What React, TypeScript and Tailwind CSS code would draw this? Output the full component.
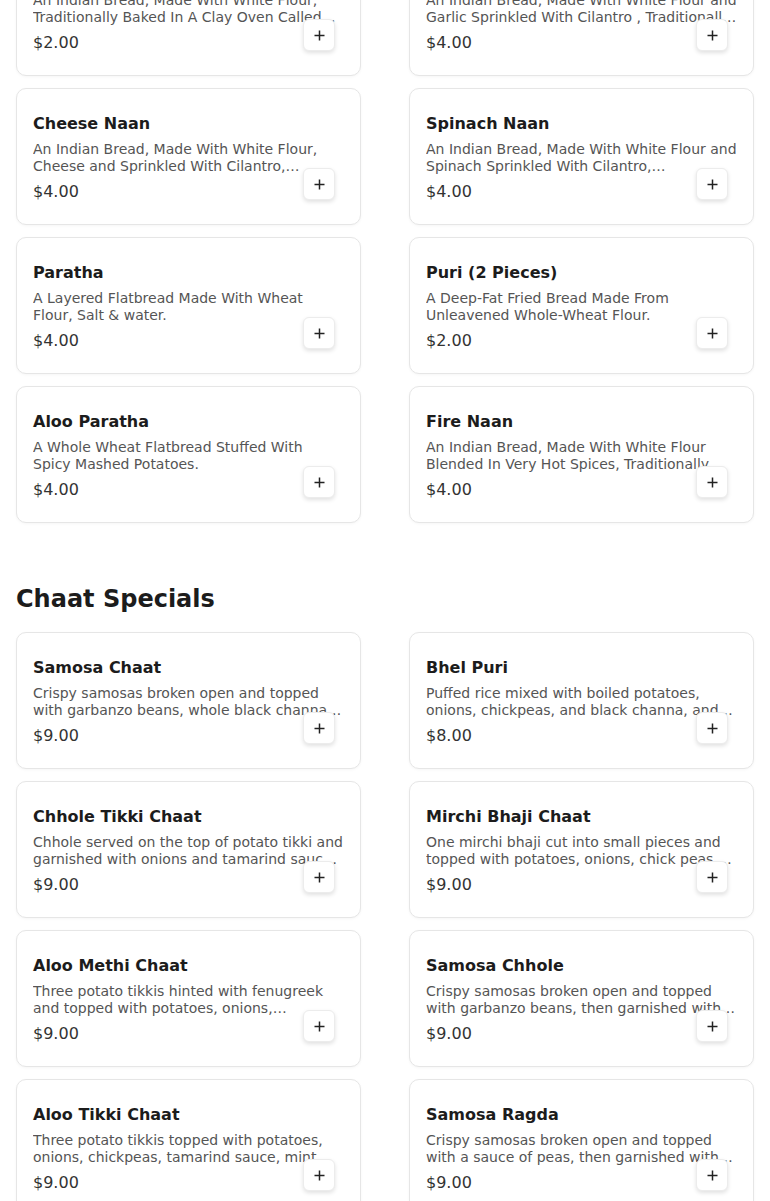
import React from "react";

type Item = { name: string; desc: string; price: string };

const breads: Item[] = [
  { name: "Plain Naan", desc: "An Indian Bread, Made With White Flour, Traditionally Baked In A Clay Oven Called Tandoor.", price: "$2.00" },
  { name: "Garlic Naan", desc: "An Indian Bread, Made With White Flour and Garlic Sprinkled With Cilantro , Traditionally Baked In A Clay Oven.", price: "$4.00" },
  { name: "Cheese Naan", desc: "An Indian Bread, Made With White Flour, Cheese and Sprinkled With Cilantro, Traditionally Baked In A Clay Oven.", price: "$4.00" },
  { name: "Spinach Naan", desc: "An Indian Bread, Made With White Flour and Spinach Sprinkled With Cilantro, Traditionally Baked In A Clay Oven.", price: "$4.00" },
  { name: "Paratha", desc: "A Layered Flatbread Made With Wheat Flour, Salt & water.", price: "$4.00" },
  { name: "Puri (2 Pieces)", desc: "A Deep-Fat Fried Bread Made From Unleavened Whole-Wheat Flour.", price: "$2.00" },
  { name: "Aloo Paratha", desc: "A Whole Wheat Flatbread Stuffed With Spicy Mashed Potatoes.", price: "$4.00" },
  { name: "Fire Naan", desc: "An Indian Bread, Made With White Flour Blended In Very Hot Spices, Traditionally Baked In A Clay Oven.", price: "$4.00" },
];

const chaat: Item[] = [
  { name: "Samosa Chaat", desc: "Crispy samosas broken open and topped with garbanzo beans, whole black channa, onions, tamarind sauce and mint sauce.", price: "$9.00" },
  { name: "Bhel Puri", desc: "Puffed rice mixed with boiled potatoes, onions, chickpeas, and black channa, and tangy chutneys.", price: "$8.00" },
  { name: "Chhole Tikki Chaat", desc: "Chhole served on the top of potato tikki and garnished with onions and tamarind sauce, mint sauce.", price: "$9.00" },
  { name: "Mirchi Bhaji Chaat", desc: "One mirchi bhaji cut into small pieces and topped with potatoes, onions, chick peas, and chutneys.", price: "$9.00" },
  { name: "Aloo Methi Chaat", desc: "Three potato tikkis hinted with fenugreek and topped with potatoes, onions, chickpeas and chutneys.", price: "$9.00" },
  { name: "Samosa Chhole", desc: "Crispy samosas broken open and topped with garbanzo beans, then garnished with onions and chutneys.", price: "$9.00" },
  { name: "Aloo Tikki Chaat", desc: "Three potato tikkis topped with potatoes, onions, chickpeas, tamarind sauce, mint sauce and yogurt.", price: "$9.00" },
  { name: "Samosa Ragda", desc: "Crispy samosas broken open and topped with a sauce of peas, then garnished with onions and chutneys.", price: "$9.00" },
];

function Card({ item }: { item: Item }) {
  return (
    <div className="relative h-[137px] rounded-[10px] border border-[#e6e6e6] bg-white px-4 pt-[23px] shadow-[0_1px_3px_rgba(0,0,0,0.04)]">
      <div className="text-[16px] font-bold leading-[24px] text-[#1c1c1c]">{item.name}</div>
      <div className="mt-[5px] line-clamp-2 text-[14px] leading-[17px] text-[#555555]">{item.desc}</div>
      <div className="mt-[5px] text-[16px] leading-[24px] text-[#333333]">{item.price}</div>
      <button className="absolute right-[25px] top-[79px] flex h-[32px] w-[32px] items-center justify-center rounded-[6px] border border-[#ececec] bg-white shadow-[0_2px_4px_rgba(0,0,0,0.12)]">
        <svg width="11" height="11" viewBox="0 0 11 11" fill="none">
          <path d="M5.5 0.5v10M0.5 5.5h10" stroke="#222" strokeWidth="1.5" />
        </svg>
      </button>
    </div>
  );
}

export default function App() {
  return (
    <div className="min-h-[1201px] overflow-hidden bg-white px-4 font-['DejaVu_Sans',sans-serif]">
      <div className="mt-[-61px] grid grid-cols-2 gap-x-[48px] gap-y-[12px]">
        {breads.map((b) => (
          <Card key={b.name} item={b} />
        ))}
      </div>
      <h2 className="mt-[60px] text-[24px] font-bold leading-[32px] text-[#1c1c1c]">Chaat Specials</h2>
      <div className="mt-[17px] grid grid-cols-2 gap-x-[48px] gap-y-[12px]">
        {chaat.map((b) => (
          <Card key={b.name} item={b} />
        ))}
      </div>
    </div>
  );
}
